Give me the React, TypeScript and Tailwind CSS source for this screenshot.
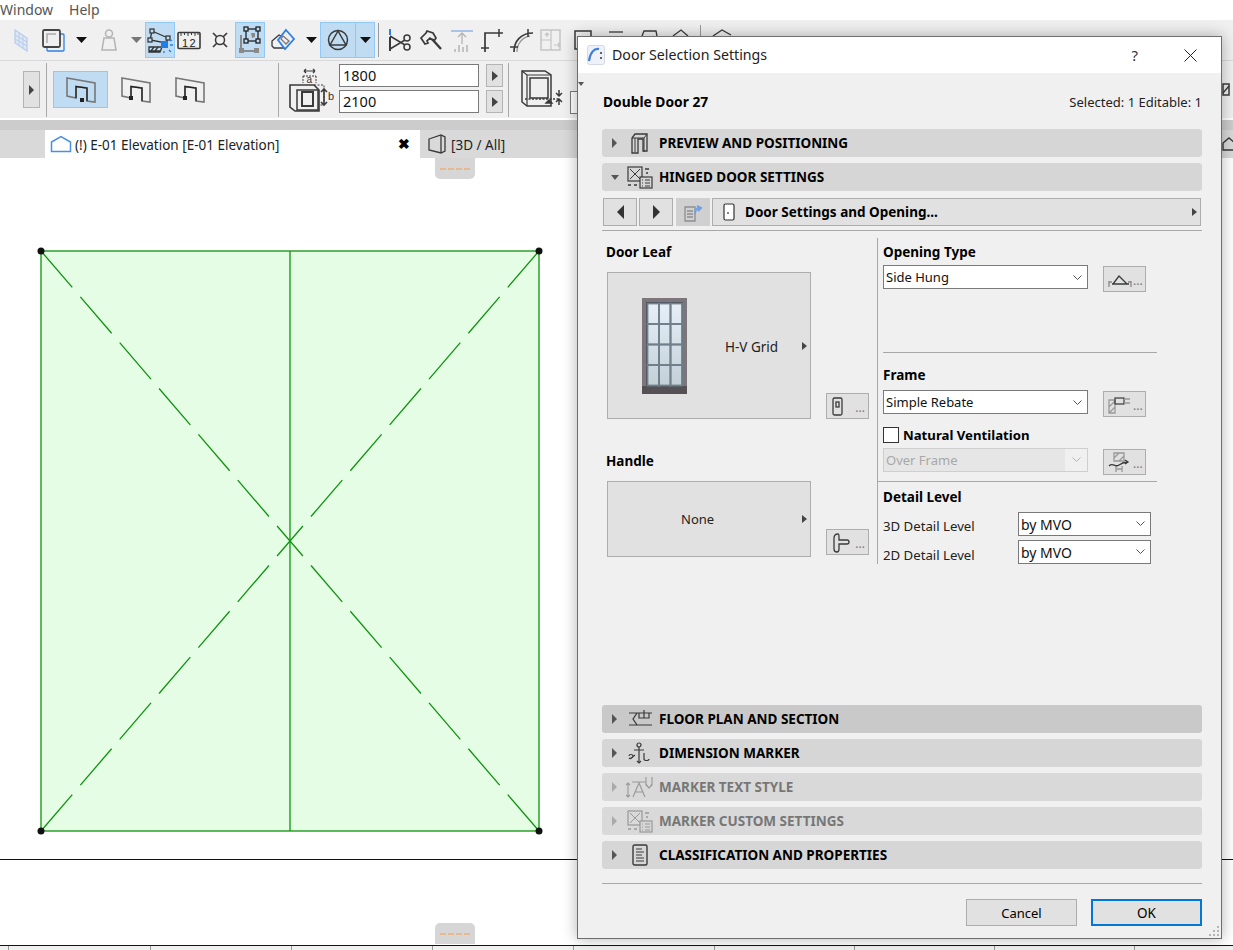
import type { ReactNode } from "react";

const ink = "#3a3a3a";

function Arrow({ gray = false, ml }: { gray?: boolean; ml: string }) {
  return (
    <svg className={`${ml} h-[6px] w-[11px] shrink-0`} viewBox="0 0 11 6">
      <path d="M0 0h11L5.5 6z" fill={gray ? "#777" : "#111"} />
    </svg>
  );
}

function Ico({ w = 24, h = 24, ml = "", children }: { w?: number; h?: number; ml?: string; children: ReactNode }) {
  return (
    <svg className={`${ml} shrink-0`} width={w} height={h} viewBox={`0 0 ${w} ${h}`} fill="none" stroke={ink} strokeWidth="1.3">
      {children}
    </svg>
  );
}

function DoorPlan({ ml, dot }: { ml: string; dot: "mid" | "left" }) {
  return (
    <Ico w={30} h={26} ml={ml}>
      <path d="M1 1 29 6v19l-8-1V11L10 9.500V21l-9-2z" stroke="#777" strokeWidth="1.600" />
      <path d="M10 21V9.500L21 11v13" stroke="#222" strokeWidth="1.300" />
      <rect x={dot === "mid" ? 14 : 8} y={dot === "mid" ? 21 : 19} width="4" height="4" fill="#222" stroke="none" />
    </Ico>
  );
}

function SmallPlay() {
  return (
    <div className="ml-[7px] flex h-[23px] w-[17px] items-center justify-center border border-[#b4b4b4] bg-[#e1e1e1]">
      <div className="h-0 w-0 border-y-[5px] border-l-[6px] border-y-transparent border-l-[#444]" />
    </div>
  );
}

function MainToolbar() {
  return (
    <div className="flex h-[41px] items-center overflow-hidden border-b border-[#d9d9d9] bg-[#f0f0f0]">
      <Ico w={16} h={24} ml="ml-[13px]">
        <path d="M2 2 14 10v13L2 15z" fill="#dfe7f4" stroke="#b9cdee" />
        <path d="M6 5v13M10 7.500v13M2 7l12 7M2 11l12 7" stroke="#b9cdee" strokeWidth="1" />
      </Ico>
      <Ico ml="ml-[12px]">
        <rect x="6" y="6" width="17" height="17" rx="1" stroke="#2f80e4" />
        <rect x="2" y="2" width="17" height="17" rx="1.500" fill="#f0f0f0" stroke="#444" strokeWidth="1.800" />
        <path d="M6 15V6h9" stroke="#aaa" strokeWidth="1.500" />
      </Ico>
      <Arrow ml="ml-[11px]" />
      <Ico w={20} h={24} ml="ml-[12px]">
        <circle cx="10" cy="5.500" r="3.500" stroke="#b4b4b4" strokeWidth="1.500" />
        <path d="M5 10h10l2 12H3z" stroke="#b4b4b4" strokeWidth="1.500" />
      </Ico>
      <Arrow gray ml="ml-[12px]" />
      <div className="ml-[3px] flex h-[36px] w-[30px] items-center justify-center border border-[#90c8f6] bg-[#c0dcf3]">
        <Ico w={26} h={28}>
          <path d="M5 5 21 12M5 5l-2 9 16 3 2-5" stroke="#333" />
          <rect x="3" y="3" width="4" height="4" fill="#c0dcf3" />
          <rect x="19" y="10" width="4" height="4" fill="#c0dcf3" />
          <rect x="1" y="12" width="4" height="4" fill="#c0dcf3" />
          <path d="M2 25h12M2 21h13l-2 5H2z" stroke="#333" />
          <path d="m4 25 3-4m1 4 3-4" stroke="#333" />
          <rect x="14" y="15" width="7" height="7" fill="#1f7fea" stroke="none" />
          <path d="M23 15l2-1M23 19h3M22 24l2 2M17 25v2" stroke="#1f7fea" />
        </Ico>
      </div>
      <Ico h={20} ml="ml-[2px]">
        <rect x="1" y="2.500" width="22" height="16" rx="1" strokeWidth="1.600" />
        <path d="M4 2v4M7.500 2v3M11 2v4M14.500 2v3M18 2v4M21 2v3" strokeWidth="1" />
        <text x="5" y="16.500" fontSize="11" letterSpacing="1.500" fill="#222" stroke="none" fontFamily="Liberation Sans">12</text>
      </Ico>
      <Ico w={20} h={20} ml="ml-[9px]">
        <circle cx="10" cy="10" r="4.500" strokeWidth="1.500" />
        <path d="m3 3 4 4m10-4-4 4M3 17l4-4m10 4-4-4" strokeWidth="1.700" />
      </Ico>
      <div className="ml-[5px] flex h-[36px] w-[30px] items-center justify-center border border-[#90c8f6] bg-[#c0dcf3]">
        <Ico w={24} h={28}>
          <path d="M3 9v16h16" stroke="#8a8a8a" strokeWidth="2" />
          <rect x="1" y="22" width="5" height="5" fill="#8a8a8a" stroke="none" />
          <rect x="16" y="22" width="5" height="5" fill="#8a8a8a" stroke="none" />
          <rect x="8" y="3" width="12" height="12" stroke="#222" />
          <rect x="6" y="1" width="4" height="4" fill="#c0dcf3" stroke="#222" />
          <rect x="18" y="1" width="4" height="4" fill="#c0dcf3" stroke="#222" />
          <rect x="6" y="13" width="4" height="4" fill="#c0dcf3" stroke="#222" />
          <rect x="18" y="13" width="4" height="4" fill="#c0dcf3" stroke="#222" />
          <path d="M13 7h4v4l-3 1z" fill="#8a8a8a" stroke="none" />
        </Ico>
      </div>
      <Ico h={24} ml="ml-[6px]">
        <path d="M1 13 8 7l6 3v10H3l-2-2z" fill="#f0f0f0" />
        <path d="M15 2 23 11 14 21 7 12z" fill="#f0f0f0" stroke="#2f80e4" strokeWidth="1.800" />
        <path d="m12 8 6 5-3 3-5-5z" stroke="#777" />
      </Ico>
      <Arrow ml="ml-[11px]" />
      <div className="ml-[3px] flex h-[36px] w-[55px] items-center border border-[#90c8f6] bg-[#c0dcf3]">
        <div className="flex h-full w-[35px] items-center justify-center border-r border-[#90c8f6]">
          <Ico w={22} h={22}>
            <circle cx="11" cy="11" r="9.500" strokeWidth="1.500" />
            <path d="M11 2 3 16h16z" strokeWidth="1.500" />
          </Ico>
        </div>
        <div className="flex flex-1 items-center justify-center">
          <Arrow ml="" />
        </div>
      </div>
      <div className="ml-[3px] h-[34px] w-px bg-[#9a9a9a]" />
      <Ico h={24} ml="ml-[10px]">
        <path d="M1 1v6" stroke="#2f80e4" strokeWidth="2" />
        <path d="M1 9v14" strokeWidth="2" />
        <path d="M1 8 16 17M1 21 16 12" strokeWidth="1.500" />
        <circle cx="18" cy="10" r="3" strokeWidth="1.500" />
        <circle cx="18" cy="19" r="3" strokeWidth="1.500" />
      </Ico>
      <Ico h={24} ml="ml-[6px]">
        <path d="M2 10 7 5l1-2 6 2 3 5-2 3-4-3-3 3 1 2-3 1z" strokeWidth="1.700" />
        <path d="m13 11 9 10" strokeWidth="2.400" />
      </Ico>
      <Ico h={24} ml="ml-[6px]">
        <path d="M2 3h22" stroke="#a9c3ea" strokeWidth="2" />
        <path d="M13 5v11M9 9l4-4 4 4" stroke="#b4b4b4" />
        <path d="M6 21v3M10 17v7M14 19v5M18 17v7" stroke="#b4b4b4" strokeWidth="1.500" />
      </Ico>
      <Ico h={24} ml="ml-[6px]">
        <path d="M6 24V5h18" strokeWidth="1.700" />
        <path d="M2 20h8M20 1v8" strokeWidth="1.500" />
      </Ico>
      <Ico h={24} ml="ml-[6px]">
        <path d="M5 24C5 13 12 5 24 5" strokeWidth="1.700" />
        <path d="M8 24C8 15 14 9 21 8" stroke="#999" />
        <path d="M1 19h8M19 1v8" strokeWidth="1.500" />
      </Ico>
      <Ico w={22} h={24} ml="ml-[7px]">
        <rect x="1" y="2" width="19" height="20" stroke="#c4c4c4" strokeWidth="1.500" />
        <path d="M1 12h10V2M11 12v10M7 9V5M5 7l2-2 2 2M14 17h6M18 15l2 2-2 2" stroke="#c4c4c4" strokeWidth="1.200" />
      </Ico>
      <Ico h={24} ml="ml-[11px]">
        <rect x="2" y="3" width="16" height="18" strokeWidth="1.500" />
      </Ico>
      <Ico ml="ml-[10px]">
        <path d="M2 4h14" strokeWidth="1.300" />
      </Ico>
      <Ico ml="ml-[6px]">
        <path d="M5 8 7 3h12l1 5" />
      </Ico>
      <Ico ml="ml-[6px]">
        <path d="M6 8 14 2l7 6" />
      </Ico>
      <div className="ml-[9px] h-[30px] w-px bg-[#9a9a9a]" />
      <Ico ml="ml-[8px]">
        <path d="M4 8 13 2l9 5" />
      </Ico>
    </div>
  );
}

function InfoToolbar() {
  return (
    <div className="flex h-[57px] items-center overflow-hidden bg-[#f0f0f0]">
      <div className="ml-[23px] flex h-[37px] w-[17px] items-center justify-center border border-[#b4b4b4] bg-[#e1e1e1]">
        <div className="h-0 w-0 border-y-[5px] border-l-[5px] border-y-transparent border-l-[#444]" />
      </div>
      <div className="ml-[6px] h-[54px] w-px bg-[#a8a8a8]" />
      <div className="ml-[6px] flex h-[37px] w-[55px] items-center justify-center border border-[#90c8f6] bg-[#c0dcf3]">
        <DoorPlan ml="" dot="mid" />
      </div>
      <DoorPlan ml="ml-[13px]" dot="left" />
      <DoorPlan ml="ml-[24px]" dot="left" />
      <div className="ml-[73px] h-[54px] w-px bg-[#a8a8a8]" />
      <Ico w={46} h={46} ml="ml-[9px]">
        <path d="M16 4h11M16 4l2-2M16 4l2 2M27 4l-2-2M27 4l-2 2" strokeWidth="1.200" />
        <path d="M15 9v7M28 9v7M15 9h13" strokeWidth="1" strokeDasharray="2 1" />
        <text x="18.500" y="16" fontSize="10" fill="#333" stroke="none" fontFamily="Liberation Sans">a</text>
        <path d="M2 18h24l5 5v21H7l-5-4z" strokeWidth="1.600" />
        <rect x="9" y="23" width="21" height="20" strokeWidth="1.500" />
        <rect x="14" y="25" width="11" height="14" strokeWidth="2" />
        <path d="M26 18h10v20H30" strokeWidth="1" strokeDasharray="2 1.500" />
        <path d="M36 22v16M33 25l3-3 3 3M33 35l3 3 3-3" strokeWidth="1.600" />
        <text x="40" y="33" fontSize="11" fill="#333" stroke="none" fontFamily="Liberation Sans">b</text>
      </Ico>
      <div className="-mt-[2px] ml-[5px] flex flex-col gap-[3px]">
        <div className="flex">
          <div className="flex h-[23px] w-[140px] items-center border border-[#7a7a7a] bg-white pl-[3px] text-[14.500px]">1800</div>
          <SmallPlay />
        </div>
        <div className="flex">
          <div className="flex h-[23px] w-[140px] items-center border border-[#7a7a7a] bg-white pl-[3px] text-[14.500px]">2100</div>
          <SmallPlay />
        </div>
      </div>
      <div className="ml-[5px] h-[54px] w-px bg-[#a8a8a8]" />
      <Ico w={44} h={40} ml="ml-[12px]">
        <path d="M1 1h23l6 4v31H6l-5-4z" strokeWidth="1.500" />
        <path d="M1 1l5 4h24M6 5v31" strokeWidth="1.200" />
        <rect x="9" y="8" width="18" height="20" strokeWidth="1.500" />
        <path d="M4 29h34" strokeDasharray="2 1.500" />
        <path d="m25 33 3-3 3 3z" fill="#333" />
        <path d="M38 20v6M35 23l3 3 3-3M38 35v-6M35 32l3-3 3 3" strokeWidth="1.500" />
      </Ico>
      <div className="ml-[5px] mt-[25px] h-[23px] w-[40px] border border-[#7a7a7a] bg-white" />
      <Ico w={8} h={14} ml="ml-auto mr-[3px]">
        <rect x="1" y="1" width="6" height="11" strokeWidth="1.500" />
        <path d="m1 10 6-7" />
      </Ico>
    </div>
  );
}

function TabStrip() {
  return (
    <div className="flex h-[28px] bg-[#d9d9d9]">
      <div className="ml-[45px] flex w-[375px] items-center bg-white pl-[5px]">
        <Ico w={22} h={18}>
          <path d="M1.500 7 11 1.500 20.500 7v9.500h-19z" stroke="#4a90e2" strokeWidth="1.500" />
        </Ico>
        <span className="ml-[3px] pt-[2px] text-[13.500px] text-[#222]">(!) E-01 Elevation [E-01 Elevation]</span>
        <span className="ml-auto mr-[10px] text-[14px] font-bold leading-none text-black">✖</span>
      </div>
      <div className="ml-[7px] flex items-center">
        <Ico w={20} h={22}>
          <path d="M2 6 14 2l4 2v14l-4 2-12-3z" strokeWidth="1.300" />
          <path d="M14 2v18" strokeWidth="1.300" />
        </Ico>
        <span className="ml-[4px] pt-[2px] text-[13.500px] text-[#222]">[3D / All]</span>
      </div>
      <div className="ml-auto mr-0 flex items-center">
        <Ico w={11} h={14}>
          <path d="M1 6 7 1l6 5v7H1z" strokeWidth="1.400" />
        </Ico>
      </div>
    </div>
  );
}

function Handle({ className }: { className: string }) {
  return (
    <div className={`absolute left-[435px] flex h-[21px] w-[40px] items-center justify-center gap-[2px] bg-[#d6d6d6] ${className}`}>
      <span className="h-[2px] w-[6px] bg-[#ebb88c]" />
      <span className="h-[2px] w-[6px] bg-[#ebb88c]" />
      <span className="h-[2px] w-[6px] bg-[#ebb88c]" />
      <span className="h-[2px] w-[6px] bg-[#ebb88c]" />
    </div>
  );
}

function Canvas() {
  const green = "#0f930f";
  return (
    <div className="relative flex-1 overflow-hidden bg-white">
      <svg className="absolute left-0 top-0" width="1233" height="787" viewBox="0 158 1233 787">
        <rect x="41" y="251" width="498" height="580" fill="#e5fce5" stroke={green} strokeWidth="1.300" />
        <path d="M290 251v580" stroke={green} strokeWidth="1.300" />
        {/* each half runs corner to centre so the short cross lands in the middle */}
        <path d="M41 251 290 541M539 251 290 541M41 831 290 541M539 831 290 541" stroke={green} strokeWidth="1.300" strokeDasharray="48 12.400" fill="none" />
        <circle cx="41" cy="251" r="3.500" fill="#111" />
        <circle cx="539" cy="251" r="3.500" fill="#111" />
        <circle cx="41" cy="831" r="3.500" fill="#111" />
        <circle cx="539" cy="831" r="3.500" fill="#111" />
        <path d="M0 859.500h1233" stroke="#111" strokeWidth="1" />
      </svg>
      <Handle className="top-0 rounded-b-[5px]" />
      <Handle className="bottom-[1px] rounded-t-[5px]" />
    </div>
  );
}

function StatusBar() {
  return (
    <div className="flex h-[5px] border-t border-[#0000b0] bg-[#f0f0f0]">
      {[9, 142, 141, 141, 141, 141, 140, 140, 140].map((w, i) => (
        <div key={i} style={{ width: w }} className="border-r border-[#999]" />
      ))}
    </div>
  );
}

function Caret({ open, faded }: { open?: boolean; faded?: boolean }) {
  return open ? (
    <div className="ml-[9px] h-0 w-0 border-x-[4.500px] border-t-[5px] border-x-transparent border-t-[#555]" />
  ) : (
    <div className={`ml-[10px] h-0 w-0 border-y-[5px] border-l-[5px] border-y-transparent ${faded ? "border-l-[#aaa]" : "border-l-[#555]"}`} />
  );
}

function Section({
  title,
  icon,
  open,
  faded,
  dark,
}: {
  title: string;
  icon: ReactNode;
  open?: boolean;
  faded?: boolean;
  dark?: boolean;
}) {
  return (
    <div className={`flex h-[28px] items-center rounded-[3px] ${dark ? "bg-[#c9c9c9]" : faded ? "bg-[#d9d9d9]" : "bg-[#d6d6d6]"}`}>
      <Caret open={open} faded={faded} />
      <div className={`flex w-[26px] justify-center ${open ? "ml-[8px]" : "ml-[10px]"} ${faded ? "opacity-40" : ""}`}>{icon}</div>
      <span className={`ml-[6px] text-[13.5px] font-bold ${faded ? "text-[#777]" : "text-black"}`}>{title}</span>
    </div>
  );
}

const SettingsIcon = (
  <Ico w={26} h={24}>
    <rect x="1" y="2" width="14" height="14" strokeWidth="1.200" />
    <path d="m3 4 10 10M13 4 3 14" strokeWidth="1" />
    <rect x="13" y="12" width="12" height="11" fill="#d6d6d6" strokeWidth="1.200" />
    <path d="M15 15h1M15 18h1M15 21h1M18 15h5M18 18h5M18 21h5" strokeWidth="1" />
    <path d="M18 4h4M19 8h2M1 20h3M7 20h3" strokeWidth="1.400" />
  </Ico>
);

function Select({ value, w, size = "text-[13px] pt-[2px]" }: { value: string; w: string; size?: string }) {
  return (
    <div className={`flex h-[24px] items-center justify-between border border-[#7a7a7a] bg-white pl-[2px] text-[#111] ${size} ${w}`}>
      <span>{value}</span>
      <svg className="mr-[5px]" width="9" height="6" viewBox="0 0 9 6" fill="none" stroke="#555">
        <path d="m.5.500 4 4 4-4" />
      </svg>
    </div>
  );
}

function DisabledSelect({ value, w }: { value: string; w: string }) {
  return (
    <div className={`flex h-[24px] items-center border border-[#cfcfcf] text-[13px] text-[#a8a8a8] ${w}`}>
      <span className="flex h-full flex-1 items-center bg-[#e6e6e6] pl-[2px] pt-px">{value}</span>
      <div className="flex w-[22px] justify-center">
        <svg width="9" height="6" viewBox="0 0 9 6" fill="none" stroke="#b4b4b4">
          <path d="m.5.500 4 4 4-4" />
        </svg>
      </div>
    </div>
  );
}

function DotsButton({ icon, ml = "ml-[15px]", mt = "mt-[1px]" }: { icon: ReactNode; ml?: string; mt?: string }) {
  return (
    <div className={`flex h-[26px] w-[43px] items-center border border-[#adadad] bg-[#e1e1e1] pl-[3px] ${ml} ${mt}`}>
      {icon}
      <span className="ml-auto mr-[3px] mt-[3px] text-[12px] leading-none text-[#777]">...</span>
    </div>
  );
}

function PickerBox({ h, children }: { h: string; children: ReactNode }) {
  return (
    <div className={`relative flex w-[204px] items-center border border-[#adadad] bg-[#e1e1e1] text-[#222] ${h}`}>
      {children}
      <div className="absolute right-[3px] top-1/2 h-0 w-0 -translate-y-1/2 border-y-[4.500px] border-l-[5px] border-y-transparent border-l-[#444]" />
    </div>
  );
}

function DoorPreview() {
  const panes = [0, 1, 2, 3].flatMap((r) => [0, 1, 2].map((c) => ({ r, c })));
  return (
    <svg className="ml-[34px]" width="45" height="96" viewBox="0 0 45 96">
      <defs>
        <linearGradient id="glass" x1="0" y1="0" x2="0" y2="1">
          <stop offset="0" stopColor="#e6eff8" />
          <stop offset="1" stopColor="#c3d0d6" />
        </linearGradient>
      </defs>
      <rect width="45" height="96" fill="#7b767a" />
      <rect y="88" width="45" height="8" fill="#555054" />
      <rect x="4" y="4" width="37" height="84" fill="#3d4650" />
      <rect x="5" y="5" width="35" height="82" fill="url(#glass)" />
      {panes.map(({ r, c }) => (
        <rect key={`${r}-${c}`} x={5.500 + c * 11.500} y={5.500 + r * 20.500} width="11.500" height="20.500" fill="none" stroke="#717f8c" strokeWidth="1.800" />
      ))}
    </svg>
  );
}

function Dialog() {
  return (
    <div className="absolute left-[577px] top-[36px] flex h-[903px] w-[645px] flex-col border border-[#6e6e6e] bg-[#f0f0f0] text-black shadow-[0_0_14px_rgba(0,0,0,0.3)]">
      <div className="flex h-[36px] shrink-0 items-center bg-white pl-[9px]">
        <svg width="18" height="20" viewBox="0 0 18 20" fill="none">
          <rect x=".5" y=".5" width="17" height="19" rx="2" fill="#eef1f8" stroke="#d5d9e6" />
          <path d="M2 16C3 8 7 3 12 4" stroke="#3f7fdc" strokeWidth="2.200" />
          <path d="M14 7v2M14 12v2" stroke="#334" strokeWidth="1.500" />
        </svg>
        <span className="ml-[7px] text-[14.200px] text-[#222]">Door Selection Settings</span>
        <span className="ml-auto text-[15px] text-[#333]">?</span>
        <svg className="ml-[46px] mr-[24px]" width="13" height="13" viewBox="0 0 13 13" stroke="#222" strokeWidth="1">
          <path d="m.5.500 12 12M12.500.500l-12 12" />
        </svg>
      </div>
      <div className="absolute left-0 top-[45px] h-0 w-0 border-x-[3px] border-t-[4px] border-x-transparent border-t-[#555]" />

      <div className="flex flex-1 flex-col pb-[12px] pl-[24px] pr-[19px]">
        <div className="mt-[19px] flex h-[20px] items-center justify-between pl-[1px]">
          <span className="text-[13.800px] font-bold">Double Door 27</span>
          <span className="pt-[2px] text-[13px] text-[#222]">Selected: 1 Editable: 1</span>
        </div>

        <div className="mt-[17px] flex flex-col gap-[6px]">
          <Section
            title="PREVIEW AND POSITIONING"
            icon={
              <Ico w={20} h={22}>
                <path d="M2 21V6l3-4h12v17h-4V7H8v14z" strokeWidth="1.300" />
                <path d="M2 6h12l3-4M14 6v14M5 6v14" strokeWidth="1" />
              </Ico>
            }
          />
          <Section title="HINGED DOOR SETTINGS" open icon={SettingsIcon} />
        </div>

        <div className="mx-[1px] mt-[7px] flex h-[28px] gap-[2px]">
          <div className="flex w-[34px] items-center justify-center border border-[#adadad] bg-[#e1e1e1]">
            <div className="h-0 w-0 border-y-[7px] border-r-[7px] border-y-transparent border-r-[#333]" />
          </div>
          <div className="flex w-[34px] items-center justify-center border border-[#adadad] bg-[#e1e1e1]">
            <div className="h-0 w-0 border-y-[7px] border-l-[7px] border-y-transparent border-l-[#333]" />
          </div>
          <div className="ml-[1px] flex w-[34px] items-center justify-center bg-[#d0d0d0]">
            <Ico w={22} h={22}>
              <path d="M3 6h10v14H3z" stroke="#8e8e8e" strokeWidth="1.300" />
              <path d="M5 10h6M5 13h6M5 16h6" stroke="#8e8e8e" />
              <path d="M13 13c0-4 2-6 5-6M15 5l4 2-3 3" stroke="#6ea2e6" strokeWidth="2" />
            </Ico>
          </div>
          <div className="relative flex flex-1 items-center border border-[#adadad] bg-[#e1e1e1] pl-[10px]">
            <svg width="12" height="18" viewBox="0 0 12 18" fill="#fff" stroke="#333" strokeWidth="1.200">
              <rect x="1" y="1" width="10" height="16" rx="1.500" />
              <path d="M5 9v2" />
            </svg>
            <span className="ml-[10px] text-[13.500px] font-bold">Door Settings and Opening...</span>
            <div className="absolute right-[3px] top-1/2 h-0 w-0 -translate-y-1/2 border-y-[4.500px] border-l-[5px] border-y-transparent border-l-[#444]" />
          </div>
        </div>
        <div className="mt-[4px] h-px bg-[#a8a8a8]" />

        <div className="flex">
          <div className="w-[275px] pt-[11px]">
            <div className="flex h-[20px] items-center pl-[4px] text-[13.500px] font-bold">Door Leaf</div>
            <div className="mt-[10px] flex items-end pl-[5px]">
              <PickerBox h="h-[147px]">
                <DoorPreview />
                <span className="ml-[38px] pt-[3px] text-[13.500px]">H-V Grid</span>
              </PickerBox>
              <DotsButton
                ml="ml-[15px]"
                mt="mt-0"
                icon={
                  <Ico w={16} h={20}>
                    <rect x="3" y="2" width="9" height="17" rx="1.500" />
                    <rect x="6" y="6" width="3" height="5" />
                  </Ico>
                }
              />
            </div>
            <div className="mt-[32px] flex h-[20px] items-center pl-[4px] text-[13.500px] font-bold">Handle</div>
            <div className="mt-[10px] flex items-end pl-[5px]">
              <PickerBox h="h-[76px]">
                <span className="ml-[73px] pt-[2px] text-[13px]">None</span>
              </PickerBox>
              <DotsButton
                ml="ml-[15px] mb-[2px]"
                mt="mt-0"
                icon={
                  <Ico w={20} h={22}>
                    <path d="M8 3C5 3 4 5 4 7v11c0 2 1 3 3 3s2-2 2-3v-5h8c1 0 2-1 2-2s-1-2-2-2H9V6c0-2 0-3-1-3z" strokeWidth="1.300" />
                  </Ico>
                }
              />
            </div>
          </div>

          <div className="mt-[7px] w-[280px] border-l border-[#a8a8a8] pl-[5px]">
            <div className="mt-[4px] flex h-[20px] items-center text-[13.500px] font-bold">Opening Type</div>
            <div className="mt-[3px] flex">
              <Select value="Side Hung" w="w-[205px]" />
              <DotsButton
                icon={
                  <Ico w={26} h={22}>
                    <path d="M5 16h17M6 16l6-8 8 8" strokeWidth="1.300" />
                    <path d="M2 13v6M24 13v6M2 14h3M21 14h3" stroke="#888" />
                  </Ico>
                }
              />
            </div>
            <div className="mt-[60px] h-px bg-[#a8a8a8]" />
            <div className="mt-[12px] flex h-[20px] items-center text-[13.500px] font-bold">Frame</div>
            <div className="mt-[5px] flex">
              <Select value="Simple Rebate" w="w-[205px]" />
              <DotsButton
                icon={
                  <Ico w={26} h={22}>
                    <path d="M2 7h6v13H2zM2 14l6-6M2 20l6-6" stroke="#999" />
                    <rect x="8" y="5" width="9" height="6" strokeWidth="1.200" />
                    <path d="M17 6h6M17 10h6" stroke="#999" />
                  </Ico>
                }
              />
            </div>
            <div className="mt-[10px] flex h-[16px] items-center">
              <div className="h-[16px] w-[16px] border border-[#333] bg-white" />
              <span className="ml-[4px] pt-[2px] text-[13.200px] font-bold">Natural Ventilation</span>
            </div>
            <div className="mt-[5px] flex">
              <DisabledSelect value="Over Frame" w="w-[205px]" />
              <DotsButton
                icon={
                  <Ico w={26} h={22}>
                    <path d="M7 2h10v8H7zM7 7l5-5M12 10l5-5M9 15v6M15 15v6M9 18h6" stroke="#999" />
                    <path d="M2 15c4-4 6 2 10-1s6-3 9-3M18 9l3 2-3 2" strokeWidth="1.300" />
                  </Ico>
                }
              />
            </div>
            <div className="-ml-[5px] mt-[6px] h-px bg-[#a8a8a8]" />
            <div className="mt-[5px] flex h-[20px] items-center text-[13.500px] font-bold">Detail Level</div>
            <div className="mt-[5px] flex h-[24px]">
              <span className="mt-[5px] w-[135px] text-[13.200px] text-[#222]">3D Detail Level</span>
              <Select value="by MVO" w="w-[133px]" size="text-[14px]" />
            </div>
            <div className="mt-[4px] flex h-[24px]">
              <span className="mt-[6px] w-[135px] text-[13.200px] text-[#222]">2D Detail Level</span>
              <Select value="by MVO" w="w-[133px]" size="text-[14px]" />
            </div>
          </div>
        </div>

        <div className="mt-auto flex flex-col gap-[6px]">
          <Section
            title="FLOOR PLAN AND SECTION"
            dark
            icon={
              <Ico w={26} h={20}>
                <path d="M2 4h8L6 10l4 6H2M10 4h15M10 16h15M17 1v8M12 4v5h10V4" strokeWidth="1.200" />
              </Ico>
            }
          />
          <Section
            title="DIMENSION MARKER"
            icon={
              <Ico w={26} h={24}>
                <circle cx="12" cy="4" r="2" strokeWidth="1.200" />
                <path d="M12 6v15M7 9h10M3 18l5-4M2 15c0-2 4-2 4 0s-3 3-4 2M17 12v6c0 2 5 2 5 0" strokeWidth="1.200" />
                <path d="M10 20l2 2 2-2" strokeWidth="1.200" />
              </Ico>
            }
          />
          <Section
            title="MARKER TEXT STYLE"
            faded
            icon={
              <Ico w={28} h={26}>
                <path d="M2 9v14M0 11l2-2 2 2M0 21l2 2 2-2M7 23l6-14 6 14M9 18h8M6 8h14M20 3v8l3 3 3-3V3M20 10l3 4 3-4" strokeWidth="1.100" />
              </Ico>
            }
          />
          <Section title="MARKER CUSTOM SETTINGS" faded icon={SettingsIcon} />
          <Section
            title="CLASSIFICATION AND PROPERTIES"
            icon={
              <Ico w={16} h={22}>
                <rect x="1" y="1" width="14" height="20" rx="1.500" strokeWidth="1.400" />
                <path d="M4 5h6M4 8h8M4 11h6M4 14h8M4 17h8" strokeWidth="1.200" />
              </Ico>
            }
          />
        </div>

        <div className="mt-[14px] h-px bg-[#a8a8a8]" />
        <div className="mt-[15px] flex justify-end gap-[14px]">
          <div className="flex h-[27px] w-[111px] items-center justify-center border border-[#adadad] bg-[#e1e1e1] pt-[2px] text-[13px]">Cancel</div>
          <div className="flex h-[27px] w-[111px] items-center justify-center border-2 border-[#0078d7] bg-[#e1e1e1] pt-[2px] text-[13.500px]">OK</div>
        </div>
      </div>

      <svg className="absolute bottom-[1px] right-[1px]" width="12" height="12" viewBox="0 0 12 12" fill="#b4b4b4">
        <rect x="9" y="1" width="2" height="2" />
        <rect x="5" y="5" width="2" height="2" />
        <rect x="9" y="5" width="2" height="2" />
        <rect x="1" y="9" width="2" height="2" />
        <rect x="5" y="9" width="2" height="2" />
        <rect x="9" y="9" width="2" height="2" />
      </svg>
    </div>
  );
}

export default function App() {
  return (
    <div className="relative flex h-[950px] w-[1233px] flex-col overflow-hidden bg-white font-['Noto_Sans',sans-serif] text-[#111]">
      <div className="flex h-[20px] items-center pb-[2px] text-[14px] text-[#555]">
        <span>Window</span>
        <span className="ml-[16px]">Help</span>
      </div>
      <MainToolbar />
      <InfoToolbar />
      <div className="h-[12px] border-t-2 border-white bg-[#cccccc]" />
      <TabStrip />
      <Canvas />
      <StatusBar />
      <Dialog />
    </div>
  );
}
